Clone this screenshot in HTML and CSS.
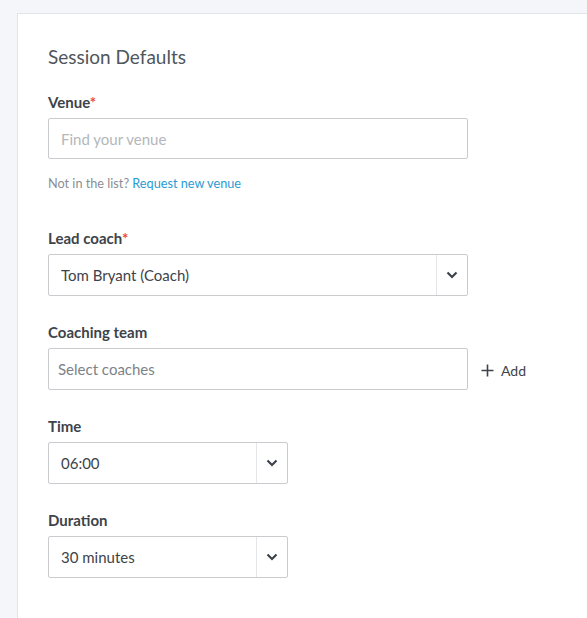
FILE: index.html
```html
<!DOCTYPE html>
<html>
<head>
<meta charset="utf-8">
<link rel="stylesheet" href="styles.css">
</head>
<body>
<div class="card">
  <h2 class="title">Session Defaults</h2>

  <div class="field field-venue">
    <label class="label">Venue<span class="req">*</span></label>
    <div class="input venue"><span class="placeholder">Find your venue</span></div>
    <p class="helper">Not in the list? <a class="link" href="#">Request new venue</a></p>
  </div>

  <div class="field">
    <label class="label">Lead coach<span class="req">*</span></label>
    <div class="select wide">
      <span class="value">Tom Bryant (Coach)</span>
      <span class="chev"><svg width="12" height="8" viewBox="0 0 12 8"><path d="M1.5 1.5 L6 6 L10.5 1.5" fill="none" stroke="#3d434a" stroke-width="2.2"/></svg></span>
    </div>
  </div>

  <div class="field">
    <label class="label">Coaching team</label>
    <div class="row">
      <div class="input multi"><span class="muted">Select coaches</span></div>
      <button class="add"><svg width="13" height="13" viewBox="0 0 13 13"><path d="M6.5 0.5 V12.5 M0.5 6.5 H12.5" stroke="#3d434a" stroke-width="1.6"/></svg><span>Add</span></button>
    </div>
  </div>

  <div class="field">
    <label class="label">Time</label>
    <div class="select narrow">
      <span class="value">06:00</span>
      <span class="chev"><svg width="12" height="8" viewBox="0 0 12 8"><path d="M1.5 1.5 L6 6 L10.5 1.5" fill="none" stroke="#3d434a" stroke-width="2.2"/></svg></span>
    </div>
  </div>

  <div class="field">
    <label class="label">Duration</label>
    <div class="select narrow">
      <span class="value">30 minutes</span>
      <span class="chev"><svg width="12" height="8" viewBox="0 0 12 8"><path d="M1.5 1.5 L6 6 L10.5 1.5" fill="none" stroke="#3d434a" stroke-width="2.2"/></svg></span>
    </div>
  </div>
</div>
</body>
</html>
```

FILE: styles.css
```css
html, body {
  margin: 0;
  height: 100%;
}
body {
  background: #f5f6fa;
  padding: 13px 0 0 17px;
  box-sizing: border-box;
  overflow: hidden;
  font-family: Lato, "Open Sans", sans-serif;
  color: #3d434a;
}
.card {
  background: #fff;
  border: 1px solid #e1e4e9;
  width: 640px;
  min-height: 700px;
  box-sizing: border-box;
  padding: 31px 30px 0 30px;
}
.title {
  margin: 0 0 23px 0;
  font-size: 19px;
  line-height: 24px;
  font-weight: 400;
  color: #50565c;
}
.field {
  margin-bottom: 26px;
}
.field-venue {
  margin-bottom: 37px;
}
.label {
  display: block;
  font-size: 15px;
  line-height: 20px;
  font-weight: 700;
  color: #3d434a;
  margin-bottom: 6px;
}
.req {
  color: #e8474b;
}
.input, .select {
  height: 42px;
  box-sizing: border-box;
  border: 1px solid #c9cbce;
  border-radius: 2px;
  display: flex;
  align-items: center;
  font-size: 15px;
}
.input.venue {
  height: 41px;
}
.input {
  width: 420px;
  padding-left: 12px;
}
.input.multi {
  padding-left: 9px;
}
.placeholder {
  color: #b3b7bb;
}
.muted {
  color: #7d8288;
}
.helper {
  margin: 16px 0 0 0;
  font-size: 12.7px;
  line-height: 16px;
  color: #8a8f95;
}
.link {
  color: #2a9bd3;
  text-decoration: none;
}
.select .value {
  flex: 1;
  padding-left: 12px;
  color: #3d434a;
}
.select.wide { width: 420px; }
.select.narrow { width: 240px; }
.chev {
  width: 30px;
  height: 100%;
  border-left: 1px solid #e3e5e8;
  display: flex;
  align-items: center;
  justify-content: center;
}
.row {
  display: flex;
  align-items: center;
}
.add {
  margin-left: 13px;
  display: flex;
  align-items: center;
  gap: 7px;
  background: none;
  border: none;
  padding: 0;
  font-family: inherit;
  font-size: 14px;
  color: #3d434a;
  margin-top: 2px;
}
```
